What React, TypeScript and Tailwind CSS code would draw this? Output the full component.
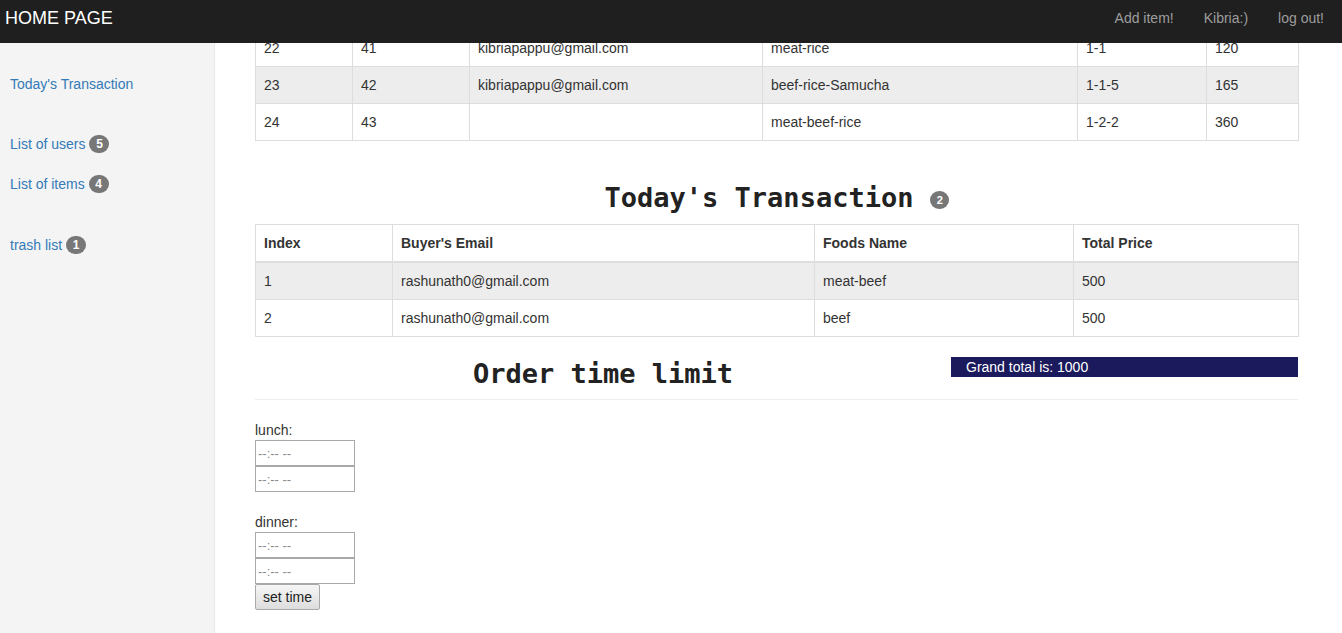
import React from 'react';

const topRows = [
  ['22', '41', 'kibriapappu@gmail.com', 'meat-rice', '1-1', '120'],
  ['23', '42', 'kibriapappu@gmail.com', 'beef-rice-Samucha', '1-1-5', '165'],
  ['24', '43', '', 'meat-beef-rice', '1-2-2', '360'],
];

const todayRows = [
  ['1', 'rashunath0@gmail.com', 'meat-beef', '500'],
  ['2', 'rashunath0@gmail.com', 'beef', '500'],
];

function Badge({ n }: { n: number }) {
  return (
    <span className="inline-flex items-center justify-center h-[18px] min-w-[20px] px-[6px] rounded-full bg-[#777] text-white text-[12px] font-bold leading-none">
      {n}
    </span>
  );
}

function TimeBox() {
  return (
    <input
      type="text"
      placeholder="--:-- --"
      className="block w-[100px] h-[26px] border border-[#a9a9a9] bg-white px-[2px] text-[13px] placeholder:text-[#8a8a8a] outline-none"
    />
  );
}

export default function App() {
  return (
    <div className="relative w-[1342px] h-[633px] overflow-hidden bg-white text-[14px] leading-5 text-[#333] font-['Liberation_Sans',Arial,sans-serif]">
      {/* navbar */}
      <div className="absolute top-0 left-0 right-0 h-[43px] bg-[#1f1f1f] flex items-start pt-[7px] z-10">
        <span className="ml-[5px] text-white text-[18px] leading-[22px]">HOME PAGE</span>
        <div className="ml-auto flex text-[#9d9d9d] text-[14px] leading-[22px] pr-[18px]">
          <a className="mr-[30px]">Add item!</a>
          <a className="mr-[30px]">Kibria:)</a>
          <a>log out!</a>
        </div>
      </div>

      <div className="flex h-full">
        {/* sidebar */}
        <div className="w-[215px] shrink-0 h-full bg-[#f4f4f4] border-r border-[#e8e8e8] pt-[74px] pl-[10px] flex flex-col items-start text-[#337ab7]">
          <a>Today's Transaction</a>
          <a className="mt-[40px] flex items-center gap-[4px]">List of users <Badge n={5} /></a>
          <a className="mt-[20px] flex items-center gap-[4px]">List of items <Badge n={4} /></a>
          <a className="mt-[41px] flex items-center gap-[4px]">trash list <Badge n={1} /></a>
        </div>

        {/* main */}
        <div className="flex-1 pl-[40px] pr-[44px] pt-[29px]">
          <table className="w-[1043px] table-fixed border-collapse border border-[#ddd]">
            <colgroup>
              <col className="w-[97px]" />
              <col className="w-[117px]" />
              <col className="w-[293px]" />
              <col className="w-[315px]" />
              <col className="w-[129px]" />
              <col className="w-[92px]" />
            </colgroup>
            <tbody>
              {topRows.map((r, i) => (
                <tr key={i} className={i % 2 === 1 ? 'bg-[#ededed]' : 'bg-white'}>
                  {r.map((c, j) => (
                    <td key={j} className="border border-[#ddd] px-2 py-2 leading-5">{c}</td>
                  ))}
                </tr>
              ))}
            </tbody>
          </table>

          <div className="mt-[39px] h-[34px] flex items-center justify-center gap-[17px] mb-[10px]">
            <h2 className="mt-[2px] font-['DejaVu_Sans_Mono',monospace] font-bold text-[27px] text-[#222]">Today's Transaction</h2>
            <span className="mt-[6px] inline-flex items-center justify-center w-[19px] h-[18px] rounded-full bg-[#777] text-white text-[11px] font-bold leading-none">2</span>
          </div>

          <table className="w-[1043px] table-fixed border-collapse border border-[#ddd]">
            <colgroup>
              <col className="w-[137px]" />
              <col className="w-[422px]" />
              <col className="w-[259px]" />
              <col className="w-[225px]" />
            </colgroup>
            <thead>
              <tr>
                {['Index', "Buyer's Email", 'Foods Name', 'Total Price'].map((h) => (
                  <th key={h} className="border border-[#ddd] border-b-2 text-left font-bold px-2 py-2 leading-5">{h}</th>
                ))}
              </tr>
            </thead>
            <tbody>
              {todayRows.map((r, i) => (
                <tr key={i} className={i % 2 === 0 ? 'bg-[#ededed]' : 'bg-white'}>
                  {r.map((c, j) => (
                    <td key={j} className="border border-[#ddd] px-2 py-2 leading-5">{c}</td>
                  ))}
                </tr>
              ))}
            </tbody>
          </table>

          <div className="mt-[10px] w-[1043px] grid grid-cols-[696px_347px] border-b border-[#eee]">
            <div className="h-[52px] flex items-center justify-center">
              <h2 className="mt-[2px] font-['DejaVu_Sans_Mono',monospace] font-bold text-[27px] text-[#222]">Order time limit</h2>
            </div>
            <div className="pt-[10px]">
              <div className="h-[20px] bg-[#1b1a5c] text-white pl-[15px] leading-5">Grand total is: 1000</div>
            </div>
          </div>

          <div className="mt-[20px]">
            <div>lunch:</div>
            <TimeBox />
            <TimeBox />
            <div className="mt-[20px]">dinner:</div>
            <TimeBox />
            <TimeBox />
            <button className="h-[26px] px-[7px] border border-[#a9a9a9] rounded-[2px] bg-gradient-to-b from-[#f6f6f6] to-[#dddddd] text-[14px] text-[#222]">
              set time
            </button>
          </div>
        </div>
      </div>
    </div>
  );
}
